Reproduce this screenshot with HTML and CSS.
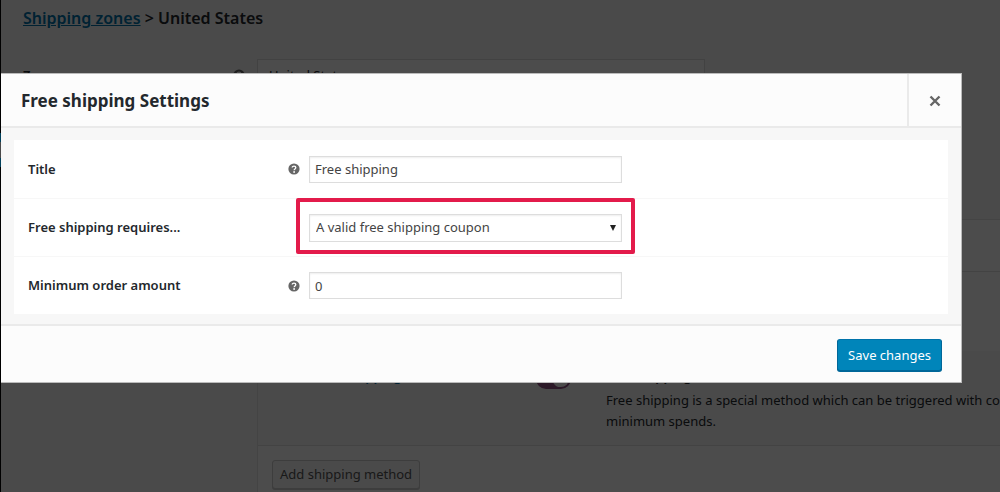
FILE: index.html
```html
<!DOCTYPE html>
<html lang="en">

<head>
    <meta charset="UTF-8">
    <title>Shipping zones</title>
    <link rel="stylesheet" href="styles.css">
</head>

<body>
    <div class="admin">
        <!-- Edge of the admin menu -->
        <div class="admin-menu">
            <div class="menu-current"></div>
        </div>

        <div class="content">
            <h2 class="breadcrumb"><a href="#">Shipping zones</a> &gt; United States</h2>

            <div class="zone-row zone-name">
                <label class="zone-label" for="zone_name">Zone name
                    <svg class="help-tip" viewBox="0 0 12 12"><circle cx="6" cy="6" r="5.6" fill="#666"/><path d="M4.2 4.6C4.2 2.6 7.8 2.6 7.8 4.6 7.8 5.9 6.1 5.9 6.1 7.2" fill="none" stroke="#fff" stroke-width="1.3"/><circle cx="6.1" cy="9" r="0.9" fill="#fff"/></svg>
                </label>
                <input type="text" id="zone_name" class="zone-input" value="United States">
            </div>

            <div class="zone-row zone-methods">
                <div class="zone-label"></div>
                <div class="methods">
                    <div class="methods-head"></div>
                    <div class="method"></div>
                    <div class="method method-alt">
                        <a href="#" class="method-title">Free shipping</a>
                        <input type="checkbox" class="toggle" aria-label="Enabled" checked>
                        <div class="method-desc">
                            <strong>Free shipping</strong>
                            <p>Free shipping is a special method which can be triggered with coupons and<br>minimum spends.</p>
                        </div>
                    </div>
                    <div class="methods-foot">
                        <button type="button" class="button">Add shipping method</button>
                    </div>
                </div>
            </div>
        </div>
    </div>

    <div class="backdrop"></div>

    <!-- Settings modal -->
    <div class="modal" role="dialog" aria-labelledby="modal_title">
        <div class="modal-header">
            <h1 id="modal_title">Free shipping Settings</h1>
            <button type="button" class="modal-close" aria-label="Close">
                <svg viewBox="0 0 12 12"><path d="M1.5 1.5L10.5 10.5M10.5 1.5L1.5 10.5" stroke="#666" stroke-width="2.4"/></svg>
            </button>
        </div>
        <form id="settings" class="modal-body">
            <div class="panel">
                <div class="row">
                    <label for="title">Title</label>
                    <svg class="help-tip" viewBox="0 0 12 12"><circle cx="6" cy="6" r="5.6" fill="#666"/><path d="M4.2 4.6C4.2 2.6 7.8 2.6 7.8 4.6 7.8 5.9 6.1 5.9 6.1 7.2" fill="none" stroke="#fff" stroke-width="1.3"/><circle cx="6.1" cy="9" r="0.9" fill="#fff"/></svg>
                    <div class="field"><input type="text" id="title" value="Free shipping"></div>
                </div>
                <div class="row">
                    <label for="requires">Free shipping requires...</label>
                    <span></span>
                    <div class="field highlight">
                        <select id="requires">
                            <option>A valid free shipping coupon</option>
                        </select>
                    </div>
                </div>
                <div class="row">
                    <label for="min_amount">Minimum order amount</label>
                    <svg class="help-tip" viewBox="0 0 12 12"><circle cx="6" cy="6" r="5.6" fill="#666"/><path d="M4.2 4.6C4.2 2.6 7.8 2.6 7.8 4.6 7.8 5.9 6.1 5.9 6.1 7.2" fill="none" stroke="#fff" stroke-width="1.3"/><circle cx="6.1" cy="9" r="0.9" fill="#fff"/></svg>
                    <div class="field"><input type="text" id="min_amount" value="0"></div>
                </div>
            </div>
        </form>
        <div class="modal-footer">
            <button type="submit" form="settings" class="button-primary">Save changes</button>
        </div>
    </div>
</body>

</html>
```

FILE: styles.css
```css
* {
    box-sizing: border-box;
}

body {
    margin: 0;
    height: 100vh;
    overflow: hidden;
    background-color: #f7f7f7;
    color: #23282d;
    font-family: "Segoe UI", "Noto Sans", "Open Sans", sans-serif;
    font-size: 13px;
    line-height: 21px;
}

input,
select,
button {
    font: inherit;
    color: inherit;
}

/* page behind the modal */
.admin {
    display: flex;
    min-height: 100vh;
}

.admin-menu {
    width: 1px;
    padding-top: 133px;
    background-color: #000;
}

.menu-current {
    height: 34px;
    border: solid #003f5a;
    border-width: 9px 0;
    background-color: #484848;
}

.content {
    flex: 1;
    min-width: 0;
    padding-top: 7px;
}

.breadcrumb {
    margin: 0 0 30px 22px;
    font-size: 16px;
    font-weight: 600;
    line-height: 22px;
}

a {
    color: #0073aa;
}

.zone-row {
    display: flex;
}

.zone-label {
    display: flex;
    flex: none;
    align-items: center;
    justify-content: space-between;
    width: 256px;
    padding: 0 12px 0 22px;
    font-weight: 600;
}

.zone-input {
    width: 448px;
    height: 32px;
    padding: 0 11px;
    border: 1px solid #ddd;
    background-color: #fff;
}

.zone-methods {
    margin-top: 128px;
}

.methods {
    flex: 1;
    min-width: 0;
    overflow: hidden;
    border: 1px solid #e5e5e5;
    border-right: 0;
    background-color: #fff;
}

.methods-head {
    height: 52px;
    border-bottom: 1px solid #e1e1e1;
}

.method {
    display: flex;
    height: 79px;
}

.method-alt {
    height: 94px;
    padding: 15px 0 0 58px;
    background-color: #f9f9f9;
}

.method-title {
    flex: none;
    width: 220px;
    font-weight: 600;
    text-decoration: none;
}

.toggle {
    flex: none;
    width: 35px;
    height: 20px;
    margin: 3px 35px 0 0;
    appearance: none;
    border: 2px solid #935687;
    border-radius: 10px;
    background: radial-gradient(circle at 23px 8px, #fff 8px, #935687 9px);
}

.method-desc {
    flex: none;
    white-space: nowrap;
}

.method-desc strong {
    font-weight: 600;
}

.method-desc p {
    margin: 3px 0 0;
}

.methods-foot {
    padding: 14px;
    border-top: 1px solid #e1e1e1;
}

.button {
    height: 29px;
    padding: 0 7px;
    border: 1px solid #ccc;
    border-radius: 3px;
    background-color: #f7f7f7;
    box-shadow: 0 1px 0 #ccc;
    color: #555;
}

.backdrop {
    position: fixed;
    inset: 0 0 0 1px;
    background-color: rgba(0, 0, 0, 0.7);
}

/* modal */
.modal {
    position: fixed;
    top: 73px;
    left: 1px;
    right: 38px;
    border: 1px solid #bbb;
    border-left: 0;
    background-color: #fcfcfc;
}

.modal-header {
    display: flex;
    height: 54px;
    border-bottom: 2px solid #eaeaea;
}

.modal-header h1 {
    flex: 1;
    margin: 0;
    padding: 0 20px;
    font-size: 17px;
    font-weight: 700;
    line-height: 54px;
}

.modal-close {
    width: 54px;
    padding: 0;
    border: 0;
    border-left: 2px solid #eaeaea;
    background: none;
    cursor: pointer;
}

.modal-close svg {
    width: 12px;
    height: 12px;
    vertical-align: middle;
}

.modal-body {
    padding: 12px 13px 10px;
    background-color: #f7f7f7;
}

.panel {
    background-color: #fff;
}

.row {
    display: grid;
    grid-template-columns: 251px 12px 1fr;
    align-items: center;
    column-gap: 9px;
    height: 58px;
    padding: 0 0 0 14px;
}

.row + .row {
    border-top: 1px solid #f7f7f7;
}

.row label {
    font-weight: 600;
}

.help-tip {
    width: 12px;
    height: 12px;
}

.field {
    width: 49%;
}

.field input,
.field select {
    display: block;
    width: 100%;
    height: 27px;
    padding: 0 5px;
    border: 1px solid #ddd;
    border-radius: 0;
    background-color: #fff;
    box-shadow: inset 0 1px 2px rgba(0, 0, 0, 0.07);
    color: #444;
}

.field select {
    height: 28px;
    padding: 0 6px;
    appearance: none;
}

.highlight {
    position: relative;
}

.highlight::before {
    content: "";
    position: absolute;
    z-index: 1;
    top: 11px;
    right: 6px;
    border: solid transparent;
    border-width: 6px 3px 0;
    border-top-color: #222;
}

.highlight::after {
    content: "";
    position: absolute;
    inset: -16px -13px -12px;
    border: 4px solid #e31b4b;
    border-radius: 2px;
    pointer-events: none;
}

.modal-footer {
    display: flex;
    justify-content: flex-end;
    padding: 13px 19px 11px;
    border-top: 2px solid #eaeaea;
}

.button-primary {
    height: 32px;
    padding: 0 10px;
    border: 1px solid #006799;
    border-color: #0073aa #006799 #006799;
    border-radius: 3px;
    background-color: #0085ba;
    box-shadow: 0 1px 0 #006799;
    color: #fff;
    cursor: pointer;
}
```
